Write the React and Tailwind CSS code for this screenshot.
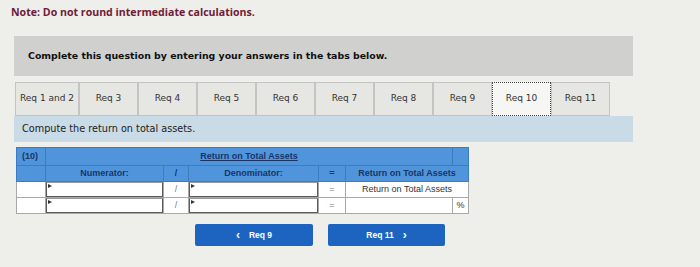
const tabs = ['Req 1 and 2', 'Req 3', 'Req 4', 'Req 5', 'Req 6', 'Req 7', 'Req 8', 'Req 9', 'Req 10', 'Req 11'];

const InputCell = () => (
  <td className="relative border border-[#a8a8a8] bg-white p-0">
    <div className="relative h-[15px] border border-[#5a5a5a] border-t-[#9a9a9a] bg-white">
      <span className="absolute left-[1px] top-[1px] h-0 w-0 border-y-[2px] border-l-[4px] border-y-transparent border-l-[#333]" />
    </div>
  </td>
);

const App = () => {
  return (
    <div className="h-[267px] w-[700px] overflow-hidden bg-[#eeeeeb] pt-[5px] font-['DejaVu_Sans',sans-serif]">
      <p className="ml-[11px] text-[10.6px] font-bold leading-[14px] text-[#6e1b37] font-['Open_Sans',sans-serif]">
        Note: Do not round intermediate calculations.
      </p>

      <div className="ml-[14px] mt-[17px] flex h-[40px] w-[619px] items-center bg-[#d0d0ce] pl-[14px]">
        <span className="text-[9.4px] font-bold text-[#111]">
          Complete this question by entering your answers in the tabs below.
        </span>
      </div>

      <div className="ml-[15px] mt-[6px] flex h-[34px] items-stretch">
        {tabs.map((tab, i) => (
          <div
            key={tab}
            className={
              i === 8
                ? 'flex w-[59px] items-center justify-center border border-dotted border-[#444] bg-[#f6f6f4] text-[9px] text-[#333]'
                : `flex ${i === 0 ? 'w-[64px]' : 'w-[59px]'} items-center justify-center border border-[#c4c4c2] bg-[#e6e6e3] text-[9px] text-[#333]`
            }
          >
            {tab}
          </div>
        ))}
      </div>

      <div className="ml-[14px] flex h-[26px] w-[619px] items-center bg-[#c8dbe6] pl-[8px] text-[9.7px] text-[#222]">
        Compute the return on total assets.
      </div>

      <table className="ml-[16px] mt-[5px] w-[452px] table-fixed border-collapse font-['Liberation_Sans',sans-serif] text-[9px]">
        <colgroup>
          <col className="w-[29px]" />
          <col className="w-[118px]" />
          <col className="w-[25px]" />
          <col className="w-[130px]" />
          <col className="w-[27px]" />
          <col className="w-[107px]" />
          <col className="w-[16px]" />
        </colgroup>
        <tbody>
          <tr className="h-[18px] bg-[#5095dc] font-bold text-[#1a3463]">
            <td className="border border-[#3d7cc0] pl-[5px] text-left">(10)</td>
            <td colSpan={5} className="border border-[#3d7cc0] text-center underline">
              Return on Total Assets
            </td>
            <td className="border border-[#3d7cc0]" />
          </tr>
          <tr className="h-[16px] bg-[#5095dc] font-bold text-[#1a3463]">
            <td className="border border-[#3d7cc0]" />
            <td className="border border-[#3d7cc0] text-center">Numerator:</td>
            <td className="border border-[#3d7cc0] text-center">/</td>
            <td className="border border-[#3d7cc0] text-center">Denominator:</td>
            <td className="border border-[#3d7cc0] text-center">=</td>
            <td colSpan={2} className="border border-[#3d7cc0] text-center">
              Return on Total Assets
            </td>
          </tr>
          <tr className="h-[16px] text-[#333]">
            <td className="border border-[#a8a8a8] bg-white" />
            <InputCell />
            <td className="border border-[#a8a8a8] bg-white text-center text-[#777]">/</td>
            <InputCell />
            <td className="border border-[#a8a8a8] bg-white text-center text-[#777]">=</td>
            <td colSpan={2} className="border border-[#a8a8a8] bg-white text-center">
              Return on Total Assets
            </td>
          </tr>
          <tr className="h-[16px] text-[#333]">
            <td className="border border-[#a8a8a8] bg-white" />
            <InputCell />
            <td className="border border-[#a8a8a8] bg-white text-center text-[#777]">/</td>
            <InputCell />
            <td className="border border-[#a8a8a8] bg-white text-center text-[#777]">=</td>
            <td className="border border-[#a8a8a8] bg-white" />
            <td className="border border-[#a8a8a8] bg-white text-center">%</td>
          </tr>
        </tbody>
      </table>

      <div className="ml-[195px] mt-[10px] flex gap-[15px] font-['Liberation_Sans',sans-serif]">
        <button className="flex h-[22px] w-[118px] items-center justify-center gap-[9px] rounded-[2px] bg-[#1c64c0] text-[8.5px] font-bold text-white">
          <span className="text-[12px] leading-none">‹</span>
          <span>Req 9</span>
        </button>
        <button className="flex h-[22px] w-[117px] items-center justify-center gap-[9px] rounded-[2px] bg-[#1c64c0] text-[8.5px] font-bold text-white">
          <span>Req 11</span>
          <span className="text-[12px] leading-none">›</span>
        </button>
      </div>
    </div>
  );
};

export default App;
